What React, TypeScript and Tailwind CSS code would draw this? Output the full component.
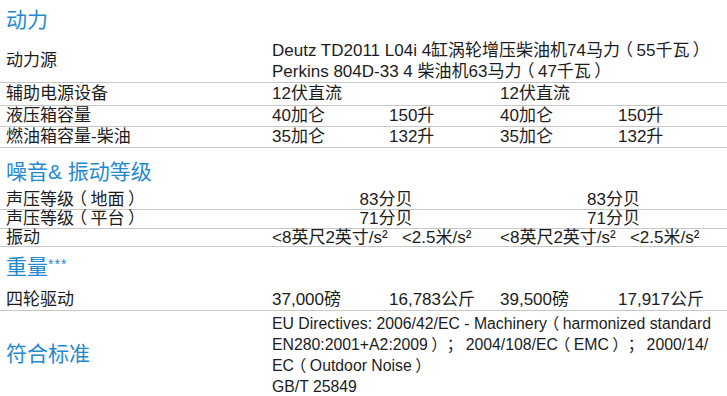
import type { ReactNode } from 'react';

const FONT = "font-['Liberation_Sans','Noto_Sans_CJK_SC',sans-serif]";
const GRID = 'grid grid-cols-[272px_117px_111px_118px_1fr]';
const ROW = `${GRID} border-b border-[#c8c8c8] text-[17px] leading-[18px] text-[#1c1c1c]`;

// full-width brackets set proportional and padded, so the glyph sits centred in a full box
const BR = "inline-block px-[4px] [font-feature-settings:'palt']";
const L = () => <span className={BR}>（</span>;
const R = () => <span className={BR}>）</span>;
const SEMI = () => <span className="inline-block px-[3px]">；</span>;

function Heading({ className, children }: { className: string; children: ReactNode }) {
  return (
    <div className={`flex pl-[6px] text-[21px] leading-[26px] text-[#2589d0] ${className}`}>
      {children}
    </div>
  );
}

// label + 4 cells
function Row({ label, cells, h }: { label: ReactNode; cells: string[]; h: string }) {
  return (
    <div className={`${ROW} ${h} items-center`}>
      <div className="pl-[6px]">{label}</div>
      {cells.map((c, i) => (
        <div key={i}>{c}</div>
      ))}
    </div>
  );
}

// label + two cells each spanning two columns
function PairRow({
  label,
  left,
  right,
  h,
  center,
}: {
  label: ReactNode;
  left: string;
  right: string;
  h: string;
  center?: boolean;
}) {
  const cell = center ? 'col-span-2 text-center' : 'col-span-2 whitespace-pre';
  return (
    <div className={`${ROW} ${h} items-center`}>
      <div className="pl-[6px]">{label}</div>
      <div className={cell}>{left}</div>
      <div className={cell}>{right}</div>
    </div>
  );
}

export default function App() {
  return (
    <div className={`w-[727px] h-[396px] overflow-hidden bg-white ${FONT}`}>
      {/* 动力 */}
      <Heading className="h-[40px] items-center">动力</Heading>
      <div className={`${ROW} h-[43px] items-center`}>
        <div className="pl-[6px]">动力源</div>
        <div className="col-span-4 leading-[21px] whitespace-nowrap">
          <div>
            Deutz TD2011 L04i 4缸涡轮增压柴油机74马力<L />55千瓦<R />
          </div>
          <div>
            Perkins 804D-33 4 柴油机63马力<L />47千瓦<R />
          </div>
        </div>
      </div>
      <PairRow label="辅助电源设备" left="12伏直流" right="12伏直流" h="h-[23px]" />
      <Row label="液压箱容量" cells={['40加仑', '150升', '40加仑', '150升']} h="h-[21px]" />
      <Row label="燃油箱容量-柴油" cells={['35加仑', '132升', '35加仑', '132升']} h="h-[21px]" />

      {/* 噪音 & 振动 */}
      <Heading className="h-[42px] pt-[6px] items-center">噪音&amp; 振动等级</Heading>
      <PairRow
        label={<>声压等级<L />地面<R /></>}
        left="83分贝"
        right="83分贝"
        h="h-[20px]"
        center
      />
      <PairRow
        label={<>声压等级<L />平台<R /></>}
        left="71分贝"
        right="71分贝"
        h="h-[19px]"
        center
      />
      <PairRow
        label="振动"
        left="<8英尺2英寸/s²   <2.5米/s²"
        right="<8英尺2英寸/s²   <2.5米/s²"
        h="h-[18px]"
      />

      {/* 重量 */}
      <Heading className="h-[43px] pb-[3px] items-center">
        重量
        <span className="text-[14px] tracking-[1px] leading-none self-start mt-[10px]">***</span>
      </Heading>
      <Row
        label="四轮驱动"
        cells={['37,000磅', '16,783公斤', '39,500磅', '17,917公斤']}
        h="h-[21px]"
      />

      {/* 符合标准 */}
      <div className={`${GRID} h-[86px] text-[#1c1c1c]`}>
        <div className="flex items-center pl-[6px] text-[21px] text-[#2589d0]">符合标准</div>
        <div className="col-span-4 pt-[2px] text-[15.8px] leading-[21px] whitespace-nowrap">
          <div>
            EU Directives: 2006/42/EC - Machinery<L />harmonized standard
          </div>
          <div>
            EN280:2001+A2:2009<R />
            <SEMI />
            2004/108/EC<L />EMC<R />
            <SEMI />
            2000/14/
          </div>
          <div>
            EC<L />Outdoor Noise<R />
          </div>
          <div>GB/T 25849</div>
        </div>
      </div>
    </div>
  );
}
